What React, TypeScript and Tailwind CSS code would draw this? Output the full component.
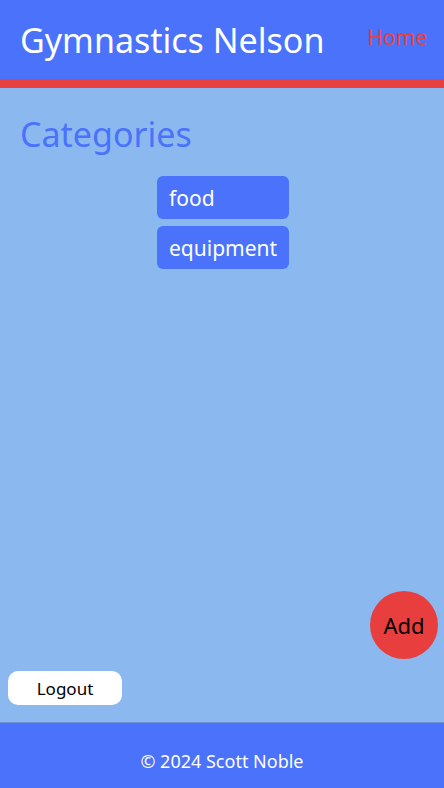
export default function App() {
  const categories = ["food", "equipment"];
  return (
    <div className="flex min-h-screen flex-col bg-[#8bb8ee] font-['Noto_Sans',sans-serif]">
      <header className="flex h-[88px] items-start justify-between border-b-[9px] border-[#e84040] bg-[#4a72fb] px-5">
        <h1 className="mt-[17px] text-[34px] leading-[46px] text-white">Gymnastics Nelson</h1>
        <a href="#" className="mt-[22px] mr-[-3px] text-[21px] leading-[30px] text-[#e84040]">
          Home
        </a>
      </header>
      <main className="flex flex-1 flex-col px-2">
        <h2 className="mt-[23px] px-3 text-[34px] leading-[46px] text-[#4a72fb]">Categories</h2>
        <div className="mt-[19px] ml-[2px] flex flex-col items-center gap-[7px]">
          {categories.map((c) => (
            <button
              key={c}
              className="h-[43px] w-[132px] rounded-md bg-[#4a72fb] px-3 pt-[3px] text-left text-[21px] text-white"
            >
              {c}
            </button>
          ))}
        </div>
        <div className="mt-auto flex justify-end">
          <button className="mr-[-2px] h-[68px] w-[68px] rounded-full bg-[#e83e3e] text-[22px] text-black">
            Add
          </button>
        </div>
        <div className="mt-[12px] mb-[17px]">
          <button className="h-[34px] w-[114px] rounded-[10px] bg-white pt-[1px] text-[17px] text-black">
            Logout
          </button>
        </div>
      </main>
      <footer className="flex h-[66px] items-center justify-center border-t border-[#6f8fd8] bg-[#4a72fb] pt-[11px] text-[18px] text-white">
        © 2024 Scott Noble
      </footer>
    </div>
  );
}
